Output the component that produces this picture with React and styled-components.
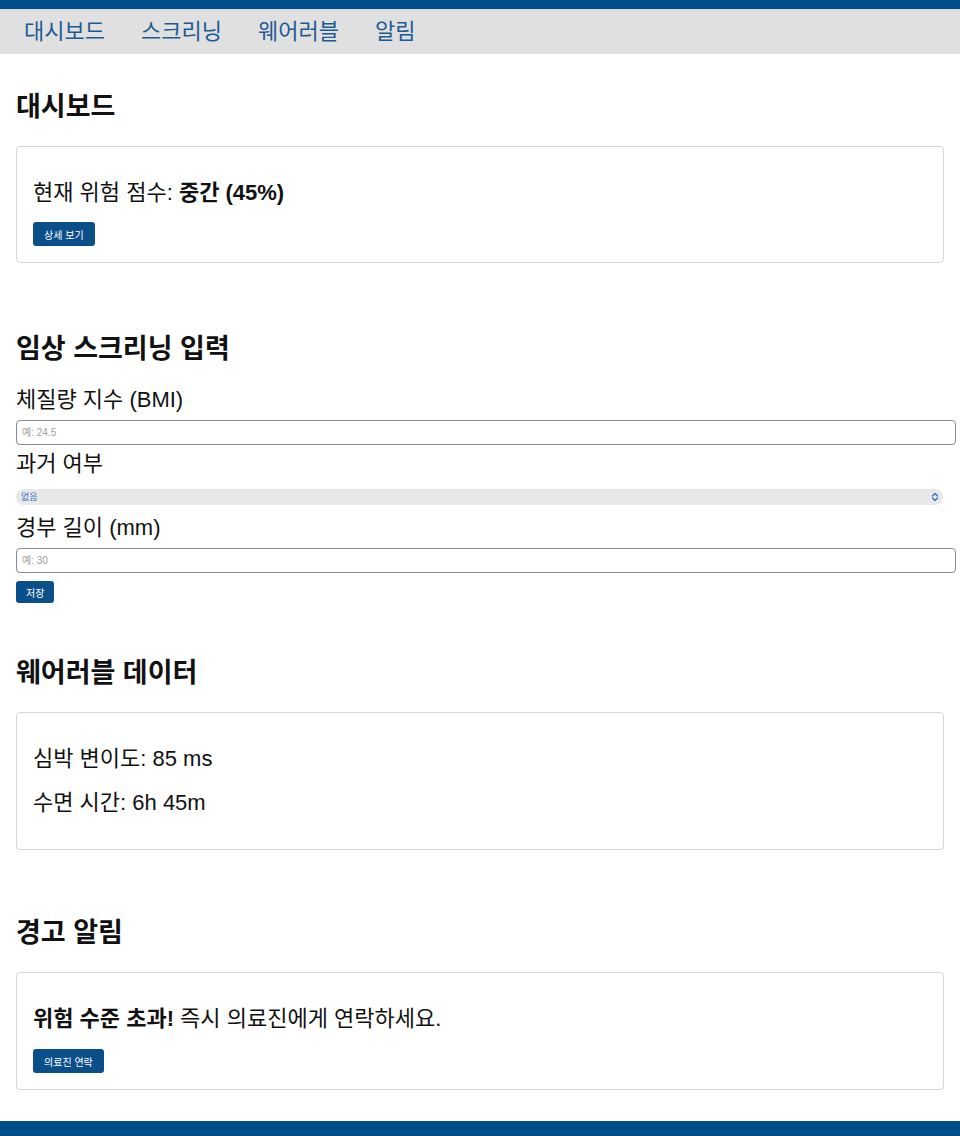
import React from "react";
import styled, { createGlobalStyle } from "styled-components";

const GlobalStyle = createGlobalStyle`
  body {
    margin: 0;
    background: #fff;
    font-family: "Liberation Sans", "Noto Sans CJK KR", sans-serif;
    color: #111;
  }
`;

const Page = styled.div`
  min-height: 1136px;
  display: flex;
  flex-direction: column;
`;

const TopBar = styled.div`
  height: 9px;
  background: #004f8b;
`;

const Nav = styled.nav`
  height: 45px;
  background: #e0e0e0;
  border-top: 1px solid #c9d9e8;
  box-sizing: border-box;
  display: flex;
  align-items: center;
  gap: 36px;
  padding-left: 24px;
`;

const NavLink = styled.a`
  font-size: 22px;
  color: #1f5b93;
  text-decoration: none;
  line-height: 1;
`;

const Main = styled.main`
  flex: 1;
  padding: 38px 16px 30px;
`;

const Section = styled.section`
  margin-bottom: ${(p) => p.$after || 71}px;
`;

const Heading = styled.h2`
  margin: 0 0 23px;
  font-size: 27px;
  line-height: 31px;
  font-weight: 700;
`;

const Card = styled.div`
  width: 928px;
  box-sizing: border-box;
  border: 1px solid #d6d6d6;
  border-radius: 4px;
  padding: 14px 16px 16px;
`;

const Text = styled.p`
  margin: 20px 0 ${(p) => p.$gap || 20}px;
  font-size: 22px;
  line-height: 24px;
  &:last-child {
    margin-bottom: 18px;
  }
`;

const Button = styled.button`
  display: block;
  height: ${(p) => p.$h || 24}px;
  padding: 0 11px;
  border: none;
  border-radius: 3px;
  background: #0b4f8a;
  color: #fff;
  font-family: inherit;
  font-size: 10px;
  cursor: pointer;
`;

const Form = styled.div`
  display: flex;
  flex-direction: column;
`;

const Label = styled.label`
  font-size: 22px;
  line-height: 24px;
  margin-bottom: ${(p) => p.$gap || 8}px;
`;

const Input = styled.input`
  width: 940px;
  height: 25px;
  box-sizing: border-box;
  border: 1px solid #8a8a8a;
  border-radius: 4px;
  padding: 0 5px;
  font-family: inherit;
  font-size: 10px;
  margin-bottom: ${(p) => p.$gap || 7}px;
  &::placeholder {
    color: #a0a0a0;
  }
`;

const SelectWrap = styled.div`
  position: relative;
  width: 927px;
  margin-bottom: 11px;
`;

const Select = styled.select`
  display: block;
  width: 100%;
  height: 16px;
  appearance: none;
  border: none;
  border-radius: 8px;
  background: #e8e8e8;
  color: #2f73c4;
  font-family: inherit;
  font-size: 9px;
  padding: 0 5px;
  outline: none;
`;

const Chevron = styled.svg`
  position: absolute;
  right: 3px;
  top: 3px;
  pointer-events: none;
`;

const SaveButton = styled(Button)`
  margin-top: 1px;
  padding: 0 10px;
`;

const Footer = styled.footer`
  height: 15px;
  background: #004f8b;
`;

export default function App() {
  return (
    <Page>
      <GlobalStyle />
      <TopBar />
      <Nav>
        <NavLink href="#dashboard">대시보드</NavLink>
        <NavLink href="#screening">스크리닝</NavLink>
        <NavLink href="#wearable">웨어러블</NavLink>
        <NavLink href="#alerts">알림</NavLink>
      </Nav>
      <Main>
        <Section id="dashboard">
          <Heading>대시보드</Heading>
          <Card>
            <Text $gap={17}>
              현재 위험 점수: <strong>중간 (45%)</strong>
            </Text>
            <Button>상세 보기</Button>
          </Card>
        </Section>

        <Section id="screening" $after={55}>
          <Heading>임상 스크리닝 입력</Heading>
          <Form>
            <Label>체질량 지수 (BMI)</Label>
            <Input placeholder="예: 24.5" />
            <Label $gap={13}>과거 여부</Label>
            <SelectWrap>
              <Select defaultValue="none">
                <option value="none">없음</option>
                <option value="yes">있음</option>
              </Select>
              <Chevron width="10" height="10" viewBox="0 0 10 10">
                <path d="M2.5 4 L5 1.5 L7.5 4 M2.5 6 L5 8.5 L7.5 6" fill="none" stroke="#2f73c4" strokeWidth="1.3" strokeLinecap="round" strokeLinejoin="round" />
              </Chevron>
            </SelectWrap>
            <Label>경부 길이 (mm)</Label>
            <Input placeholder="예: 30" />
            <div>
              <SaveButton $h={22}>저장</SaveButton>
            </div>
          </Form>
        </Section>

        <Section id="wearable" $after={68}>
          <Heading>웨어러블 데이터</Heading>
          <Card>
            <Text>심박 변이도: 85 ms</Text>
            <Text>수면 시간: 6h 45m</Text>
          </Card>
        </Section>

        <Section id="alerts" $after={1}>
          <Heading>경고 알림</Heading>
          <Card>
            <Text $gap={18}>
              <strong>위험 수준 초과!</strong> 즉시 의료진에게 연락하세요.
            </Text>
            <Button>의료진 연락</Button>
          </Card>
        </Section>
      </Main>
      <Footer />
    </Page>
  );
}
